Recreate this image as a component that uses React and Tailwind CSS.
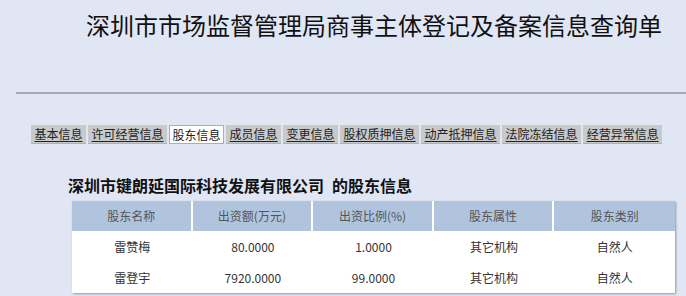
import React from 'react';

const tabs = ['基本信息', '许可经营信息', '股东信息', '成员信息', '变更信息', '股权质押信息', '动产抵押信息', '法院冻结信息', '经营异常信息'];

const headers = ['股东名称', '出资额(万元)', '出资比例(%)', '股东属性', '股东类别'];

const rows = [
  ['雷赞梅', '80.0000', '1.0000', '其它机构', '自然人'],
  ['雷登宇', '7920.0000', '99.0000', '其它机构', '自然人'],
];

const font = { fontFamily: '"Noto Sans CJK SC", "Noto Sans", sans-serif' };

export default function App() {
  return (
    <div className="w-[686px] h-[296px] bg-[#e1e6f4] overflow-hidden" style={font}>
      <div className="pt-[9px] pl-[86px] text-[24px] leading-[32px] text-[#111]">
        深圳市市场监督管理局商事主体登记及备案信息查询单
      </div>

      <div className="mt-[51px] ml-[16px] h-[2px] bg-[#a5a9b4]" />

      <div className="mt-[31px] pl-[31px] flex gap-[2px]">
        {tabs.map((t) =>
          t === '股东信息' ? (
            <div key={t} className="h-[19px] px-[2.5px] text-[12px] leading-[17px] text-[#222] bg-white border border-[#9fb0cc]">
              {t}
            </div>
          ) : (
            <div key={t} className="h-[19px] px-[3.5px] text-[12px] leading-[18px] text-[#222] bg-[#c8c9cb] border-b border-[#9fb3cf] underline underline-offset-2">
              {t}
            </div>
          )
        )}
      </div>

      <div className="mt-[31px] pl-[68px] text-[16px] leading-[20px] font-bold text-[#111]">
        深圳市键朗延国际科技发展有限公司<span className="ml-[8px]">的股东信息</span>
      </div>

      <div className="mt-[6px] ml-[72px] w-[603px] bg-white shadow-[1px_1px_2px_rgba(0,0,0,0.35)]">
        <div className="grid grid-cols-5 bg-[#b0c4de] h-[30px] text-[12px] text-[#555]">
          {headers.map((h, i) => (
            <div key={h} className={`flex items-center justify-center ${i < 4 ? 'border-r-2 border-white' : ''}`}>
              {h}
            </div>
          ))}
        </div>
        {rows.map((r, ri) => (
          <div key={ri} className="grid grid-cols-5 h-[31px] text-[12px] text-[#333]">
            {r.map((c, ci) => (
              <div key={ci} className="flex items-center justify-center">
                {c}
              </div>
            ))}
          </div>
        ))}
      </div>
    </div>
  );
}
